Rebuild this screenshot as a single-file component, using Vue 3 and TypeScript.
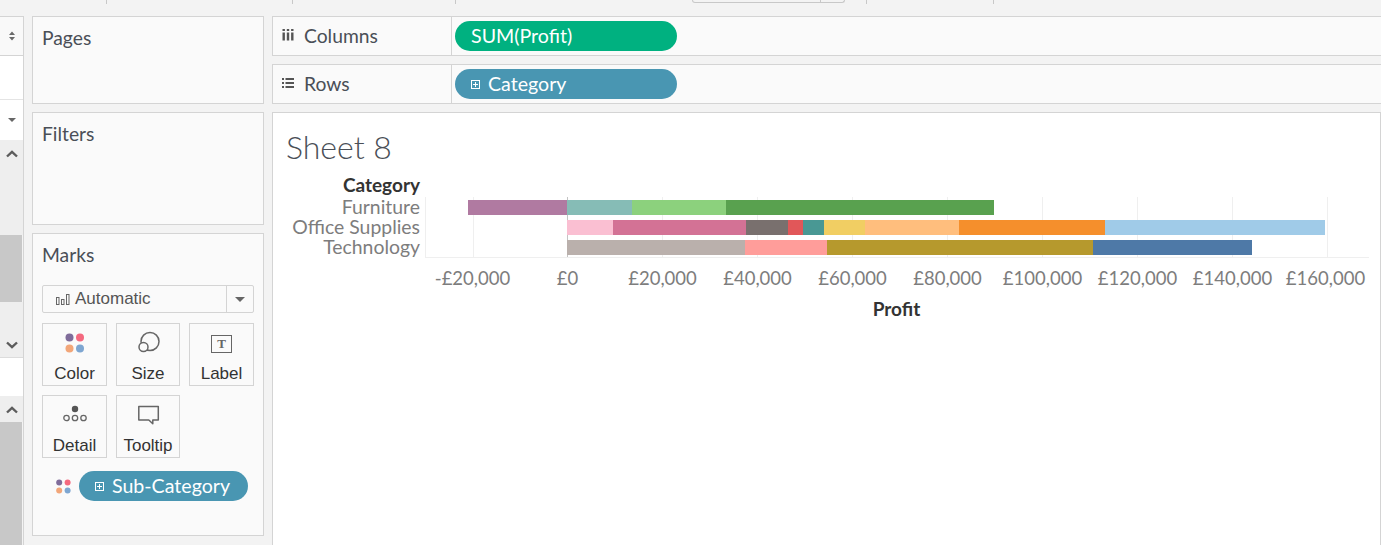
<template>
  <div class="page">
    <div class="toolbar">
      <span class="tick" style="width: 107px"></span>
      <span class="tick" style="width: 186px"></span>
      <span class="tick" style="width: 163px"></span>
      <span class="combo"><i></i></span>
      <span class="tick" style="width: 22px"></span>
      <span class="tick" style="width: 127px"></span>
    </div>

    <div class="body">
      <aside class="rail">
        <div class="rail-head">
          <svg width="6" height="10" viewBox="0 0 6 10" fill="#6a6a6a">
            <path d="M3 0.500 6 4H0zM0 6h6L3 9.500z" />
          </svg>
        </div>
        <div class="rail-white"></div>
        <div class="rail-drop"><span class="caret small"></span></div>
        <div class="scroll first">
          <svg class="chev" viewBox="0 0 12 8"><path d="M1 6.500 6 1.800l5 4.700" /></svg>
        </div>
        <div class="thumb first-thumb"></div>
        <div class="scroll second">
          <svg class="chev" viewBox="0 0 12 8"><path d="M1 1.500 6 6.200l5-4.700" /></svg>
        </div>
        <div class="rail-gap"></div>
        <div class="scroll third">
          <svg class="chev" viewBox="0 0 12 8"><path d="M1 6.500 6 1.800l5 4.700" /></svg>
        </div>
        <div class="thumb last-thumb"></div>
      </aside>

      <section class="side">
        <div class="panel pages"><h3>Pages</h3></div>
        <div class="panel filters"><h3>Filters</h3></div>
        <div class="panel marks">
          <h3>Marks</h3>
          <div class="mark-select">
            <div class="mark-value">
              <svg width="14" height="12" viewBox="0 0 14 12" class="bars">
                <rect x="0.500" y="4.500" width="2.500" height="7" />
                <rect x="5.500" y="6.500" width="2.500" height="5" />
                <rect x="10.500" y="1.500" width="2.500" height="10" />
              </svg>
              Automatic
            </div>
            <div class="mark-arrow"><span class="caret"></span></div>
          </div>
          <div class="mark-grid">
            <div class="mark-btn">
              <svg width="24" height="24" viewBox="0 0 24 24">
                <circle cx="6.500" cy="6.500" r="4" fill="#7f6c9a" />
                <circle cx="17" cy="6.500" r="4" fill="#f4697f" />
                <circle cx="6.500" cy="17.500" r="4" fill="#f2a679" />
                <circle cx="17" cy="17.500" r="4" fill="#7ea6d1" />
              </svg>
              <span>Color</span>
            </div>
            <div class="mark-btn">
              <svg width="24" height="24" viewBox="0 0 24 24" fill="#fafafa" stroke="#666" stroke-width="1.500">
                <circle cx="14" cy="10.500" r="9" />
                <circle cx="7.500" cy="16" r="4.500" />
              </svg>
              <span>Size</span>
            </div>
            <div class="mark-btn">
              <div class="t-box">T</div>
              <span>Label</span>
            </div>
            <div class="mark-btn">
              <svg width="24" height="24" viewBox="0 0 24 24" fill="none" stroke="#666" stroke-width="1.300">
                <circle cx="12" cy="6" r="3.200" fill="#555" stroke="none" />
                <circle cx="3.500" cy="15" r="2.700" />
                <circle cx="12" cy="15" r="2.700" />
                <circle cx="20.500" cy="15" r="2.700" />
              </svg>
              <span>Detail</span>
            </div>
            <div class="mark-btn">
              <svg width="24" height="24" viewBox="0 0 24 24" fill="none" stroke="#666" stroke-width="1.500">
                <path d="M2.800 3.500h19.500v13.500h-5.500v3.800l-4-3.800H2.800z" stroke-linejoin="round" />
              </svg>
              <span>Tooltip</span>
            </div>
          </div>
          <div class="mark-field">
            <svg width="15" height="15" viewBox="0 0 15 15">
              <circle cx="3.200" cy="3.500" r="3" fill="#7f6c9a" />
              <circle cx="11.600" cy="3.500" r="3" fill="#f4697f" />
              <circle cx="3.200" cy="11.500" r="3" fill="#f2a679" />
              <circle cx="11.600" cy="11.500" r="3" fill="#7ea6d1" />
            </svg>
            <div class="pill blue sub">
              <span class="plus"></span>
              Sub-Category
            </div>
          </div>
        </div>
      </section>

      <main class="main">
        <div class="shelf">
          <div class="shelf-name">
            <svg width="12" height="12" viewBox="0 0 12 12" fill="#555">
              <rect x="0.500" y="0" width="2.400" height="2" />
              <rect x="0.500" y="3.500" width="2.400" height="8" />
              <rect x="4.800" y="0" width="2.400" height="2" />
              <rect x="4.800" y="3.500" width="2.400" height="8" />
              <rect x="9.100" y="0" width="2.400" height="2" />
              <rect x="9.100" y="3.500" width="2.400" height="8" />
            </svg>
            Columns
          </div>
          <div class="shelf-drop"><div class="pill green">SUM(Profit)</div></div>
        </div>
        <div class="shelf">
          <div class="shelf-name">
            <svg width="12" height="12" viewBox="0 0 12 12" fill="#555">
              <rect x="0" y="1" width="2" height="2" />
              <rect x="3.500" y="1" width="8.500" height="2" />
              <rect x="0" y="5" width="2" height="2" />
              <rect x="3.500" y="5" width="8.500" height="2" />
              <rect x="0" y="9" width="2" height="2" />
              <rect x="3.500" y="9" width="8.500" height="2" />
            </svg>
            Rows
          </div>
          <div class="shelf-drop">
            <div class="pill blue"><span class="plus"></span>Category</div>
          </div>
        </div>

        <div class="sheet">
          <h1>Sheet 8</h1>
          <div class="viz">
            <div class="labels">
              <div class="cat-title">Category</div>
              <div v-for="row in rows" :key="row.name" class="cat">{{ row.name }}</div>
            </div>
            <div class="plot-area">
              <div class="plot">
                <span
                  v-for="(g, i) in gridLines"
                  :key="g"
                  class="grid"
                  :class="{ zero: i === 1 }"
                  :style="{ left: g + 'px' }"
                ></span>
                <div
                  v-for="row in rows"
                  :key="row.name"
                  class="bar-row"
                  :style="{ marginLeft: row.start + 'px' }"
                >
                  <span
                    v-for="seg in row.segs"
                    :key="seg.color"
                    :style="{ width: seg.w + 'px', background: seg.color }"
                  ></span>
                </div>
              </div>
              <div class="ticks">
                <span v-for="t in ticks" :key="t">{{ t }}</span>
              </div>
              <div class="axis-title">Profit</div>
            </div>
          </div>
        </div>
      </main>
    </div>
  </div>
</template>

<script setup lang="ts">
interface Segment {
  w: number
  color: string
}

interface BarRow {
  name: string
  start: number
  segs: Segment[]
}

// widths in px, 95px = £20,000
const rows: BarRow[] = [
  {
    name: 'Furniture',
    start: 42,
    segs: [
      { w: 99, color: '#b07aa1' },
      { w: 65, color: '#86bcb6' },
      { w: 94, color: '#8cd17d' },
      { w: 268, color: '#59a14f' }
    ]
  },
  {
    name: 'Office Supplies',
    start: 141,
    segs: [
      { w: 46, color: '#fabfd2' },
      { w: 133, color: '#d37295' },
      { w: 42, color: '#79706e' },
      { w: 15, color: '#e15759' },
      { w: 21, color: '#499894' },
      { w: 41, color: '#f1ce63' },
      { w: 94, color: '#ffbe7d' },
      { w: 146, color: '#f58f2c' },
      { w: 220, color: '#a0cbe8' }
    ]
  },
  {
    name: 'Technology',
    start: 141,
    segs: [
      { w: 178, color: '#bab0ac' },
      { w: 82, color: '#ff9d9a' },
      { w: 266, color: '#b6992d' },
      { w: 159, color: '#4e79a7' }
    ]
  }
]

const gridLines = [47, 141, 236, 331, 426, 521, 616, 711, 806, 901]

const ticks = [
  '-£20,000',
  '£0',
  '£20,000',
  '£40,000',
  '£60,000',
  '£80,000',
  '£100,000',
  '£120,000',
  '£140,000',
  '£160,000'
]
</script>

<style scoped>
.page {
  width: 1381px;
  height: 545px;
  overflow: hidden;
  background: #f3f3f3;
  font-family: Lato, 'Open Sans', sans-serif;
  color: #4a4f57;
}

.toolbar {
  height: 16px;
  display: flex;
  align-items: flex-start;
}
.tick {
  height: 4px;
  border-right: 1px solid #c8c8c8;
  box-sizing: border-box;
}
.combo {
  width: 153px;
  height: 3px;
  box-sizing: border-box;
  border: 1px solid #c8c8c8;
  border-top: 0;
  border-radius: 0 0 3px 3px;
  margin-left: 236px;
}
.combo i {
  display: block;
  width: 127px;
  height: 2px;
  border-right: 1px solid #c8c8c8;
}

.body {
  display: flex;
  height: 529px;
}

/* left rail */
.rail {
  width: 24px;
  flex: none;
  box-sizing: border-box;
  border-top: 1px solid #d4d4d4;
  border-right: 1px solid #d4d4d4;
  display: flex;
  flex-direction: column;
}
.rail-head {
  height: 38px;
  background: #f9f9f9;
  border-bottom: 1px solid #d4d4d4;
  display: flex;
  align-items: center;
  justify-content: center;
}
.rail-white {
  height: 43px;
  background: #fff;
  border-bottom: 1px solid #e4e4e4;
}
.rail-drop {
  height: 40px;
  background: #fff;
  display: flex;
  align-items: center;
  justify-content: center;
}
.scroll {
  background: #eeeeee;
  display: flex;
  justify-content: center;
  box-sizing: border-box;
}
.scroll.first {
  height: 95px;
  padding-top: 10px;
}
.thumb {
  background: #c8c8c8;
  margin-right: 1px;
}
.first-thumb {
  height: 67px;
}
.scroll.second {
  height: 55px;
  padding-top: 39px;
}
.rail-gap {
  height: 39px;
  background: #fff;
  border-top: 1px solid #dcdcdc;
  box-sizing: border-box;
}
.scroll.third {
  height: 26px;
  padding-top: 10px;
}
.last-thumb {
  flex: 1;
}
.chev {
  display: block;
  width: 12px;
  height: 8px;
  fill: none;
  stroke: #5c5c5c;
  stroke-width: 2.400;
}

/* pages, filters, marks */
.side {
  width: 232px;
  flex: none;
  margin-left: 8px;
  display: flex;
  flex-direction: column;
  gap: 8px;
}
.panel {
  background: #fafafa;
  border: 1px solid #d4d4d4;
  box-sizing: border-box;
  padding: 10px 9px;
}
.panel h3 {
  margin: 0;
  font-size: 19.300px;
  font-weight: 400;
  line-height: 22px;
}
.pages {
  height: 88px;
}
.filters {
  height: 113px;
}
.marks {
  height: 303px;
}
.mark-select {
  margin-top: 19px;
  height: 28px;
  box-sizing: border-box;
  border: 1px solid #d4d4d4;
  border-radius: 2px;
  background: #fafafa;
  display: flex;
  font-family: 'Liberation Sans', Arial, sans-serif;
  font-size: 17px;
  color: #555;
}
.mark-value {
  flex: 1;
  display: flex;
  align-items: center;
  gap: 5px;
  padding-left: 13px;
  border-right: 1px solid #d4d4d4;
}
.bars {
  fill: none;
  stroke: #666;
  stroke-width: 1;
}
.mark-arrow {
  width: 26px;
  display: flex;
  align-items: center;
  justify-content: center;
}
.caret {
  width: 0;
  height: 0;
  border-left: 5px solid transparent;
  border-right: 5px solid transparent;
  border-top: 5px solid #666;
}
.caret.small {
  border-left-width: 4px;
  border-right-width: 4px;
  border-top-width: 4px;
}
.mark-grid {
  margin-top: 10px;
  display: grid;
  grid-template-columns: 65px 64px 65px;
  grid-auto-rows: 63px;
  gap: 9px;
  width: 212px;
}
.mark-btn {
  box-sizing: border-box;
  border: 1px solid #d4d4d4;
  display: flex;
  flex-direction: column;
  align-items: center;
  font-family: 'Liberation Sans', Arial, sans-serif;
  font-size: 17px;
  color: #333;
  padding-top: 7px;
}
.mark-btn span {
  margin-top: 9px;
  line-height: 20px;
}
.t-box {
  width: 21px;
  height: 18px;
  margin: 4px 0 2px;
  box-sizing: border-box;
  border: 1.500px solid #666;
  font-family: 'Liberation Serif', serif;
  font-weight: 700;
  font-size: 13px;
  line-height: 15px;
  text-align: center;
  color: #666;
}
.mark-field {
  margin-top: 13px;
  padding-left: 14px;
  display: flex;
  align-items: center;
  gap: 8px;
}

/* pills */
.pill {
  height: 30px;
  width: 222px;
  border-radius: 15px;
  display: flex;
  align-items: center;
  color: #fff;
  font-size: 19.600px;
  padding: 0 0 2px 16px;
  box-sizing: border-box;
}
.pill.green {
  background: #00b180;
}
.pill.blue {
  background: #4996b2;
  gap: 8px;
}
.pill.sub {
  width: 169px;
}
.plus {
  width: 7px;
  height: 7px;
  margin-top: 2px;
  border: 1px solid #fff;
  background:
    linear-gradient(#fff, #fff) center / 5px 1px no-repeat,
    linear-gradient(#fff, #fff) center / 1px 5px no-repeat;
  flex: none;
}

/* shelves */
.main {
  flex: 1;
  margin-left: 8px;
  display: flex;
  flex-direction: column;
  gap: 8px;
  min-width: 0;
}
.shelf {
  height: 40px;
  flex: none;
  box-sizing: border-box;
  display: flex;
  background: #fafafa;
  border: 1px solid #d4d4d4;
  border-right: 0;
}
.shelf-name {
  width: 179px;
  box-sizing: border-box;
  border-right: 1px solid #d4d4d4;
  display: flex;
  align-items: center;
  gap: 10px;
  padding: 0 0 2px 9px;
  font-size: 19.300px;
}
.shelf-drop {
  flex: 1;
  padding: 4px 3px;
}

/* chart */
.sheet {
  flex: 1;
  background: #fff;
  box-sizing: border-box;
  border: 1px solid #d4d4d4;
  border-bottom: 0;
  padding-top: 15px;
}
.sheet h1 {
  margin: 0 0 0 13px;
  font-size: 32px;
  line-height: 38px;
  font-weight: 300;
  color: #4a4f57;
}
.viz {
  display: flex;
  margin-top: 9px;
}
.labels {
  width: 147px;
  flex: none;
  text-align: right;
  font-size: 19.400px;
  color: #7d7d7d;
}
.cat-title {
  font-weight: 700;
  font-size: 19px;
  line-height: 20px;
  color: #333;
  margin-bottom: 2px;
}
.cat {
  line-height: 20px;
}
.plot-area {
  margin-left: 5px;
  width: 944px;
  margin-top: 22px;
}
.plot {
  position: relative;
  height: 61px;
  box-sizing: border-box;
  border-left: 1px solid #efefef;
  border-bottom: 1px solid #efefef;
  padding-top: 3px;
  display: flex;
  flex-direction: column;
  gap: 5px;
}
.grid {
  position: absolute;
  top: 0;
  bottom: 0;
  width: 1px;
  background: #efefef;
}
.grid.zero {
  background: #c4c4c4;
}
.bar-row {
  position: relative;
  display: flex;
  height: 15px;
}
.bar-row span {
  display: block;
  height: 100%;
}
.ticks {
  display: flex;
  margin-top: 9px;
  font-size: 18.500px;
  line-height: 22px;
  color: #7d7d7d;
}
.ticks span {
  width: 95px;
  flex: none;
  text-align: center;
  white-space: nowrap;
}
/* last label is pushed in from the plot edge */
.ticks span:last-child {
  margin-left: -2px;
}
.axis-title {
  margin-top: 9px;
  text-align: center;
  font-weight: 700;
  font-size: 19px;
  line-height: 22px;
  color: #333;
  width: 943px;
}
</style>

<style>
html,
body {
  margin: 0;
  background: #f3f3f3;
}
</style>
